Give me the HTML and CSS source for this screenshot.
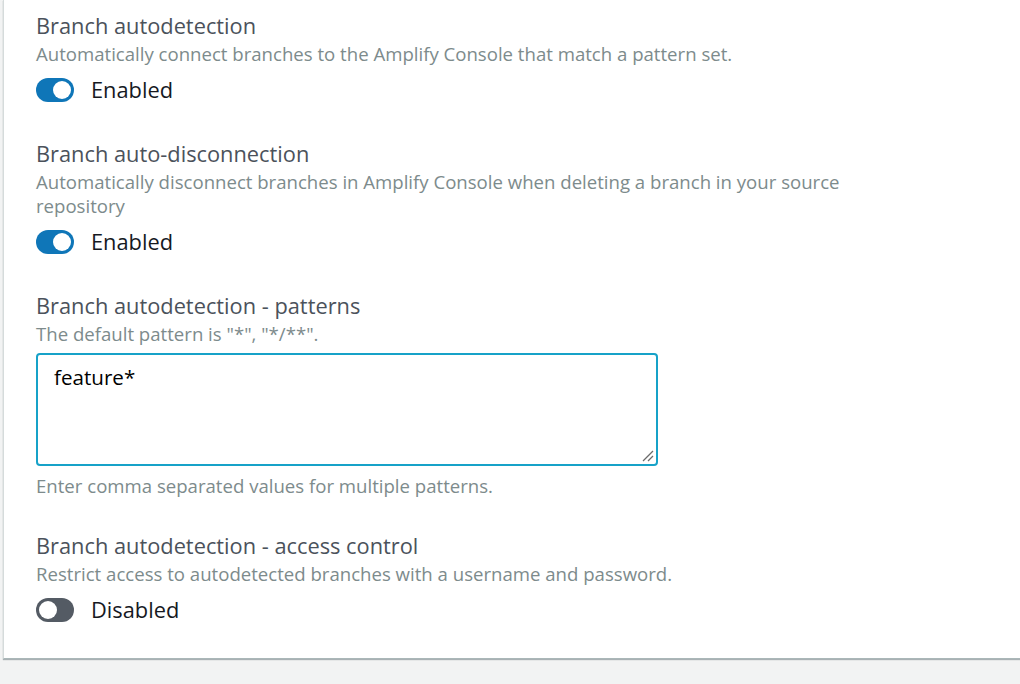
FILE: index.html
```html
<!DOCTYPE html>
<html lang="en">
<head>
<meta charset="utf-8">
<title>Branch settings</title>
<link rel="stylesheet" href="styles.css">
</head>
<body>
<div class="page">
  <section class="card">
    <div class="field">
      <div class="label">Branch autodetection</div>
      <div class="desc">Automatically connect branches to the Amplify Console that match a pattern set.</div>
      <label class="toggle-row">
        <span class="toggle on"><span class="knob"></span></span>
        <span class="toggle-text">Enabled</span>
      </label>
    </div>
    <div class="field">
      <div class="label">Branch auto-disconnection</div>
      <div class="desc">Automatically disconnect branches in Amplify Console when deleting a branch in your source repository</div>
      <label class="toggle-row">
        <span class="toggle on"><span class="knob"></span></span>
        <span class="toggle-text">Enabled</span>
      </label>
    </div>
    <div class="field">
      <div class="label">Branch autodetection - patterns</div>
      <div class="desc">The default pattern is "*", "*/**".</div>
      <div class="textarea-wrap">
        <div class="textarea">feature*</div>
        <svg class="grip" width="12" height="12" viewBox="0 0 12 12"><path d="M11 1 L1 11 M11 6 L6 11" stroke="#6b6b6b" stroke-width="1.3" fill="none"/></svg>
      </div>
      <div class="hint">Enter comma separated values for multiple patterns.</div>
    </div>
    <div class="field last">
      <div class="label">Branch autodetection - access control</div>
      <div class="desc">Restrict access to autodetected branches with a username and password.</div>
      <label class="toggle-row">
        <span class="toggle off"><span class="knob"></span></span>
        <span class="toggle-text">Disabled</span>
      </label>
    </div>
  </section>
</div>
</body>
</html>
```

FILE: styles.css
```css
html, body {
  margin: 0;
  padding: 0;
}
body {
  background: #f2f3f3;
  font-family: "Open Sans", "Noto Sans", sans-serif;
  width: 1020px;
  height: 684px;
  overflow: hidden;
}
.page {
  padding-left: 3px;
}
.card {
  background: #ffffff;
  border-left: 1px solid #d5dbdb;
  border-bottom: 1px solid #aab7b8;
  box-shadow: 0 1px 1px rgba(0, 28, 36, 0.3);
  padding: 12px 0 36px 32px;
}
.field {
  margin-bottom: 38px;
}
.field.last {
  margin-bottom: 0;
}
.label {
  color: #4b525b;
  font-size: 21.8px;
  line-height: 28px;
  margin-bottom: 2px;
}
.desc {
  color: #7d8b8c;
  font-size: 18.6px;
  line-height: 24px;
  max-width: 860px;
}
.toggle-row {
  display: flex;
  align-items: center;
  gap: 17px;
  margin-top: 12px;
  height: 24px;
}
.toggle {
  width: 38px;
  height: 24px;
  border-radius: 12px;
  position: relative;
  flex: none;
}
.toggle.on {
  background: #0f76b8;
}
.toggle.off {
  background: #545b64;
}
.knob {
  position: absolute;
  top: 3px;
  width: 18px;
  height: 18px;
  border-radius: 50%;
  background: #ffffff;
}
.toggle.on .knob {
  right: 3px;
}
.toggle.off .knob {
  left: 3px;
}
.toggle-text {
  color: #16191f;
  font-size: 21.8px;
  line-height: 24px;
}
.textarea-wrap {
  position: relative;
  margin-top: 7px;
  width: 622px;
}
.textarea {
  box-sizing: border-box;
  width: 622px;
  height: 113px;
  border: 2px solid #17a2c8;
  border-radius: 4px;
  padding: 10px 16px;
  color: #000000;
  font-size: 20.6px;
  line-height: 24px;
}
.grip {
  position: absolute;
  right: 4px;
  bottom: 4px;
}
.hint {
  color: #7d8b8c;
  font-size: 18.6px;
  line-height: 24px;
  margin-top: 8px;
  margin-bottom: -4px;
}
```
